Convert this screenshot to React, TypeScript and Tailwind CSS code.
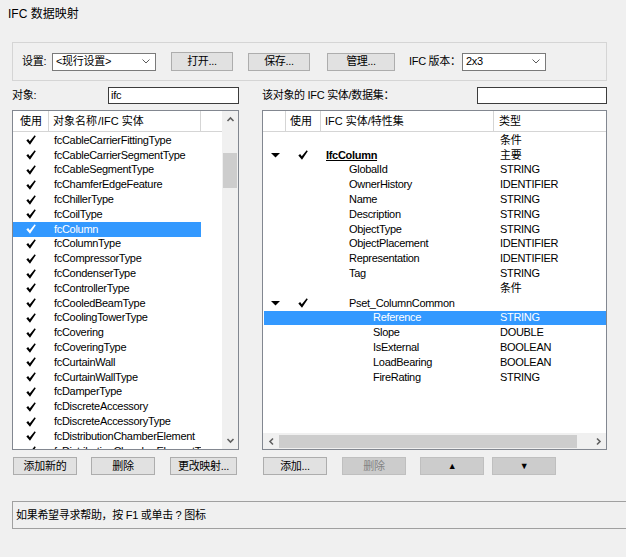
import React from 'react';

const leftItems = [
  'fcCableCarrierFittingType',
  'fcCableCarrierSegmentType',
  'fcCableSegmentType',
  'fcChamferEdgeFeature',
  'fcChillerType',
  'fcCoilType',
  'fcColumn',
  'fcColumnType',
  'fcCompressorType',
  'fcCondenserType',
  'fcControllerType',
  'fcCooledBeamType',
  'fcCoolingTowerType',
  'fcCovering',
  'fcCoveringType',
  'fcCurtainWall',
  'fcCurtainWallType',
  'fcDamperType',
  'fcDiscreteAccessory',
  'fcDiscreteAccessoryType',
  'fcDistributionChamberElement',
  'fcDistributionChamberElementType',
];

type TreeRow = {
  name?: string;
  type?: string;
  level?: 0 | 1 | 2;
  expand?: boolean;
  bold?: boolean;
  selected?: boolean;
};

const treeRows: TreeRow[] = [
  { type: '条件' },
  { name: 'IfcColumn', type: '主要', level: 0, expand: true, bold: true },
  { name: 'GlobalId', type: 'STRING', level: 1 },
  { name: 'OwnerHistory', type: 'IDENTIFIER', level: 1 },
  { name: 'Name', type: 'STRING', level: 1 },
  { name: 'Description', type: 'STRING', level: 1 },
  { name: 'ObjectType', type: 'STRING', level: 1 },
  { name: 'ObjectPlacement', type: 'IDENTIFIER', level: 1 },
  { name: 'Representation', type: 'IDENTIFIER', level: 1 },
  { name: 'Tag', type: 'STRING', level: 1 },
  { type: '条件' },
  { name: 'Pset_ColumnCommon', level: 1, expand: true },
  { name: 'Reference', type: 'STRING', level: 2, selected: true },
  { name: 'Slope', type: 'DOUBLE', level: 2 },
  { name: 'IsExternal', type: 'BOOLEAN', level: 2 },
  { name: 'LoadBearing', type: 'BOOLEAN', level: 2 },
  { name: 'FireRating', type: 'STRING', level: 2 },
];

function Check() {
  return (
    <svg width="10" height="10" viewBox="0 0 9 9" className="shrink-0">
      <path d="M0.3 4.9 L1.9 3.6 L3.4 5.6 L7.8 0.2 L8.8 1.1 L3.6 8.8 Z" fill="currentColor" />
    </svg>
  );
}

function Triangle() {
  return (
    <svg width="9" height="5" viewBox="0 0 9 5">
      <polygon points="0,0 9,0 4.5,4.6" fill="#000" />
    </svg>
  );
}

function Chevron({ dir }: { dir: 'up' | 'down' | 'left' | 'right' }) {
  const paths = {
    up: 'M1.5 6 L4.5 3 L7.5 6',
    down: 'M1.5 3 L4.5 6 L7.5 3',
    left: 'M6 1.5 L3 4.5 L6 7.5',
    right: 'M3 1.5 L6 4.5 L3 7.5',
  };
  return (
    <svg width="9" height="9" viewBox="0 0 9 9">
      <path d={paths[dir]} fill="none" stroke="#606060" strokeWidth="1.6" />
    </svg>
  );
}

function Combo({ value, width }: { value: string; width: string }) {
  return (
    <div className={`${width} h-[18px] flex items-center justify-between border border-[#7a7a7a] bg-white pl-[3px] pr-[5px]`}>
      <span>{value}</span>
      <svg width="8" height="5" viewBox="0 0 8 5">
        <path d="M0.5 0.5 L4 4 L7.5 0.5" fill="none" stroke="#5a5a5a" strokeWidth="1" />
      </svg>
    </div>
  );
}

function Btn({ label, className, disabled }: { label: React.ReactNode; className: string; disabled?: boolean }) {
  return (
    <div
      className={`${className} h-[18px] flex items-center justify-center border ${
        disabled ? 'border-[#bfbfbf] bg-[#cccccc] text-[#838383]' : 'border-[#adadad] bg-[#e1e1e1] text-black'
      }`}
    >
      {label}
    </div>
  );
}

export default function App() {
  return (
    <div className="w-[626px] h-[557px] overflow-hidden bg-[#f0f0f0] text-[11px] leading-[13px] tracking-[-0.3px] text-black font-['Liberation_Sans','Noto_Sans_CJK_SC',sans-serif]">
      <div className="h-[42px] pl-[8px] pt-[7px] text-[12px] leading-[14px] tracking-normal">IFC 数据映射</div>

      {/* settings group */}
      <div className="ml-[12px] w-[595px] h-[39px] flex items-center border border-[#d5d5d5] pl-[9px]">
        <span className="w-[30px]">设置:</span>
        <Combo value="<现行设置>" width="w-[104px]" />
        <Btn label="打开..." className="ml-[15px] w-[62px] h-[19px]" />
        <Btn label="保存..." className="ml-[15px] w-[62px]" />
        <Btn label="管理..." className="ml-[17px] w-[68px]" />
        <span className="ml-[14px] w-[53px]">IFC 版本：</span>
        <Combo value="2x3" width="w-[84px]" />
      </div>

      {/* filter row */}
      <div className="mt-[6px] h-[17px] flex items-center">
        <span className="ml-[12px] w-[96px]">对象:</span>
        <div className="w-[131px] h-[17px] border border-[#3c3c3c] bg-white pl-[2px] flex items-center">ifc</div>
        <span className="ml-[23px] w-[215px]">该对象的 IFC 实体/数据集：</span>
        <div className="w-[130px] h-[17px] border border-[#3c3c3c] bg-white" />
      </div>

      {/* lists */}
      <div className="mt-[6px] flex">
        {/* left list */}
        <div className="ml-[12px] w-[227px] h-[340px] flex border border-[#828790] bg-white">
          <div className="w-[209px] overflow-hidden">
            <div className="h-[21px] flex border-b border-[#d5d5d5] tracking-normal">
              <div className="w-[36px] pl-[7px] flex items-center border-r border-[#d5d5d5]">使用</div>
              <div className="w-[152px] pl-[4px] flex items-center border-r border-[#d5d5d5] whitespace-nowrap">
                <span>对象名称</span>
                <span className="ml-[1px]">/IFC 实体</span>
              </div>
              <div className="flex-1" />
            </div>
            <div className="pt-[1px]">
              {leftItems.map((item) => {
                const sel = item === 'fcColumn';
                return (
                  <div
                    key={item}
                    className={`w-[188px] h-[14.8px] flex items-center ${sel ? 'bg-[#3399ff] text-white' : 'text-black'}`}
                  >
                    <div className="w-[36px] pl-[13px] flex items-center">
                      <Check />
                    </div>
                    <div className="flex-1 pl-[5px] whitespace-nowrap overflow-hidden">{item}</div>
                  </div>
                );
              })}
            </div>
          </div>
          <div className="w-[16px] flex flex-col bg-[#f0f0f0]">
            <div className="h-[17px] flex items-center justify-center">
              <Chevron dir="up" />
            </div>
            <div className="flex-1">
              <div className="mt-[25px] mx-[1px] h-[35px] bg-[#cdcdcd]" />
            </div>
            <div className="h-[17px] flex items-center justify-center">
              <Chevron dir="down" />
            </div>
          </div>
        </div>

        {/* right tree */}
        <div className="ml-[23px] w-[345px] h-[340px] flex flex-col border border-[#828790] bg-white">
          <div className="h-[21px] shrink-0 flex border-b border-[#d5d5d5] tracking-normal">
            <div className="w-[23px] border-r border-[#d5d5d5]" />
            <div className="w-[35px] pl-[4px] flex items-center border-r border-[#d5d5d5]">使用</div>
            <div className="w-[173px] pl-[4px] flex items-center border-r border-[#d5d5d5]">IFC 实体/特性集</div>
            <div className="flex-1 pl-[5px] flex items-center">类型</div>
          </div>
          <div className="flex-1 pt-[1px]">
            {treeRows.map((r, i) => (
              <div
                key={i}
                className={`h-[14.8px] flex items-center ${r.selected ? 'ml-[1px] bg-[#3399ff] text-white' : 'text-black'}`}
              >
                <div className={`${r.selected ? 'w-[22px]' : 'w-[23px]'} pl-[8px] flex items-center`}>
                  {r.expand && <Triangle />}
                </div>
                <div className="w-[35px] pl-[12px] flex items-center">{r.expand && <Check />}</div>
                <div
                  className={`w-[173px] whitespace-nowrap ${
                    r.level === 0 ? 'pl-[5px]' : r.level === 1 ? 'pl-[28px]' : 'pl-[52px]'
                  } ${r.bold ? 'font-bold underline' : ''}`}
                >
                  {r.name}
                </div>
                <div className="flex-1 pl-[6px] whitespace-nowrap">{r.type}</div>
              </div>
            ))}
          </div>
          <div className="h-[16px] shrink-0 flex items-center bg-[#f0f0f0]">
            <div className="w-[16px] flex justify-center">
              <Chevron dir="left" />
            </div>
            <div className="w-[298px] h-[13px] bg-[#cdcdcd]" />
            <div className="flex-1" />
            <div className="w-[16px] flex justify-center">
              <Chevron dir="right" />
            </div>
          </div>
        </div>
      </div>

      {/* bottom buttons */}
      <div className="mt-[7px] flex">
        <Btn label="添加新的" className="ml-[13px] w-[64px]" />
        <Btn label="删除" className="ml-[14px] w-[64px]" />
        <Btn label="更改映射..." className="ml-[15px] w-[67px]" />
        <Btn label="添加..." className="ml-[26px] w-[64px]" />
        <Btn label="删除" className="ml-[15px] w-[64px]" disabled />
        <Btn label={<span className="text-[9px] text-black">▲</span>} className="ml-[14px] w-[64px]" disabled />
        <Btn label={<span className="text-[9px] text-black">▼</span>} className="ml-[8px] w-[64px]" disabled />
      </div>

      {/* status bar */}
      <div className="mt-[26px] ml-[12px] w-[620px] h-[28px] flex items-center border border-[#a0a0a0] pl-[3px]">
        如果希望寻求帮助，按 F1 或单击 ? 图标
      </div>
    </div>
  );
}
